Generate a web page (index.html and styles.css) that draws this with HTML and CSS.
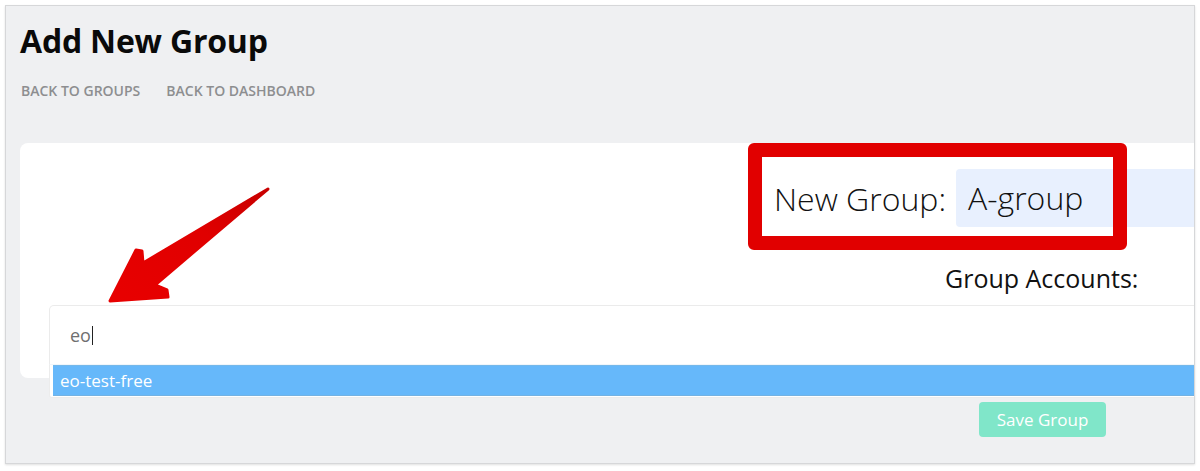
FILE: index.html
```html
<!DOCTYPE html>
<html>
<head>
<meta charset="utf-8">
<link rel="stylesheet" href="styles.css">
</head>
<body>
<div class="frame">
  <header class="header">
    <h1 class="title">Add New Group</h1>
    <nav class="links">
      <a class="link">BACK TO GROUPS</a>
      <a class="link">BACK TO DASHBOARD</a>
    </nav>
  </header>
  <section class="card">
    <div class="name-row">
      <label class="name-label">New Group:</label>
      <div class="name-input">A-group</div>
    </div>
    <div class="accounts-row">Group Accounts:</div>
    <div class="search">
      <div class="search-input"><span class="typed">eo</span><span class="caret"></span></div>
      <div class="dropdown">
        <div class="option">eo-test-free</div>
      </div>
    </div>
  </section>
  <div class="actions">
    <button class="save">Save Group</button>
  </div>
  <div class="highlight"></div>
  <svg class="arrow" width="180" height="130" viewBox="100 180 180 130">
    <defs>
      <linearGradient id="ag" x1="0" y1="1" x2="1" y2="0">
        <stop offset="0" stop-color="#e80000"/>
        <stop offset="0.6" stop-color="#e00000"/>
        <stop offset="1" stop-color="#c80000"/>
      </linearGradient>
    </defs>
    <path d="M267 188 L154 284 L166 289 L167 296 L109 300 L135 249 L141 250 L142 262 Z" fill="url(#ag)" stroke="url(#ag)" stroke-width="3" stroke-linejoin="round"/>
  </svg>
</div>
</body>
</html>
```
FILE: styles.css
```css
html, body {
  margin: 0;
  padding: 0;
  background: #ffffff;
}
body {
  font-family: "Open Sans", "Liberation Sans", sans-serif;
  width: 1200px;
  height: 471px;
  overflow: hidden;
}
.frame {
  position: relative;
  margin: 5px 0 0 5px;
  width: 1188px;
  height: 457px;
  border: 1px solid #d6d7d9;
  background: #eff0f2;
  box-shadow: 0 1px 2px rgba(0,0,0,0.12);
  overflow: hidden;
}
.header {
  padding: 13px 0 0 14px;
}
.title {
  margin: 0;
  font-size: 32px;
  line-height: 44px;
  font-weight: 700;
  color: #0a0a0a;
  letter-spacing: -0.2px;
}
.links {
  display: flex;
  gap: 26px;
  margin-top: 18px;
  padding-left: 1px;
}
.link {
  font-size: 14px;
  font-weight: 600;
  color: #8d8e90;
  line-height: 20px;
}
.card {
  margin: 42px 0 0 14px;
  width: 1200px;
  height: 235px;
  background: #ffffff;
  border-radius: 8px;
  box-sizing: border-box;
  padding-top: 26px;
}
.name-row {
  display: flex;
  align-items: center;
  margin-left: 754px;
}
.name-label {
  font-size: 32px;
  font-weight: 300;
  color: #111;
  margin-right: 10px;
  margin-top: 1px;
}
.name-input {
  flex: 1;
  height: 58px;
  line-height: 58px;
  background: #e8f0fe;
  border-radius: 4px;
  padding-left: 12px;
  font-size: 32px;
  font-weight: 300;
  color: #111;
}
.accounts-row {
  margin: 34px 0 0 925px;
  font-size: 25px;
  font-weight: 400;
  color: #111;
  line-height: 34px;
}
.search {
  margin: 10px 0 0 29px;
  position: relative;
  z-index: 2;
}
.search-input {
  height: 58px;
  border: 1px solid #ebebeb;
  border-bottom: none;
  border-radius: 5px 5px 0 0;
  background: #fff;
  display: flex;
  align-items: center;
  padding-left: 20px;
}
.typed {
  font-size: 18px;
  color: #6f6f6f;
}
.caret {
  display: inline-block;
  width: 1px;
  height: 19px;
  background: #222;
  margin-left: 1px;
  margin-top: 1px;
}
.dropdown {
  background: #fff;
  border: 1px solid #ececec;
  border-top: 1px solid #f0f6fb;
  padding: 0 0 1px 3px;
  border-radius: 0 0 3px 3px;
}
.option {
  height: 31px;
  line-height: 30px;
  background: #66b8fa;
  border-top: 1px solid #74b8ea;
  border-bottom: 1px solid #74b2e2;
  box-sizing: border-box;
  padding-left: 7px;
  font-size: 17px;
  color: #ffffff;
}
.actions {
  position: absolute;
  left: 973px;
  top: 396px;
}
.save {
  width: 127px;
  height: 35px;
  border: none;
  border-radius: 4px;
  background: #80e6c9;
  color: #ffffff;
  font-family: "Open Sans", "Liberation Sans", sans-serif;
  font-size: 17px;
  padding: 0;
}
.highlight {
  position: absolute;
  left: 742px;
  top: 137px;
  width: 351px;
  height: 79px;
  border: 14px solid #e10000;
  border-radius: 6px;
  z-index: 3;
}
.arrow {
  position: absolute;
  left: 95px;
  top: 175px;
  z-index: 3;
}
```
